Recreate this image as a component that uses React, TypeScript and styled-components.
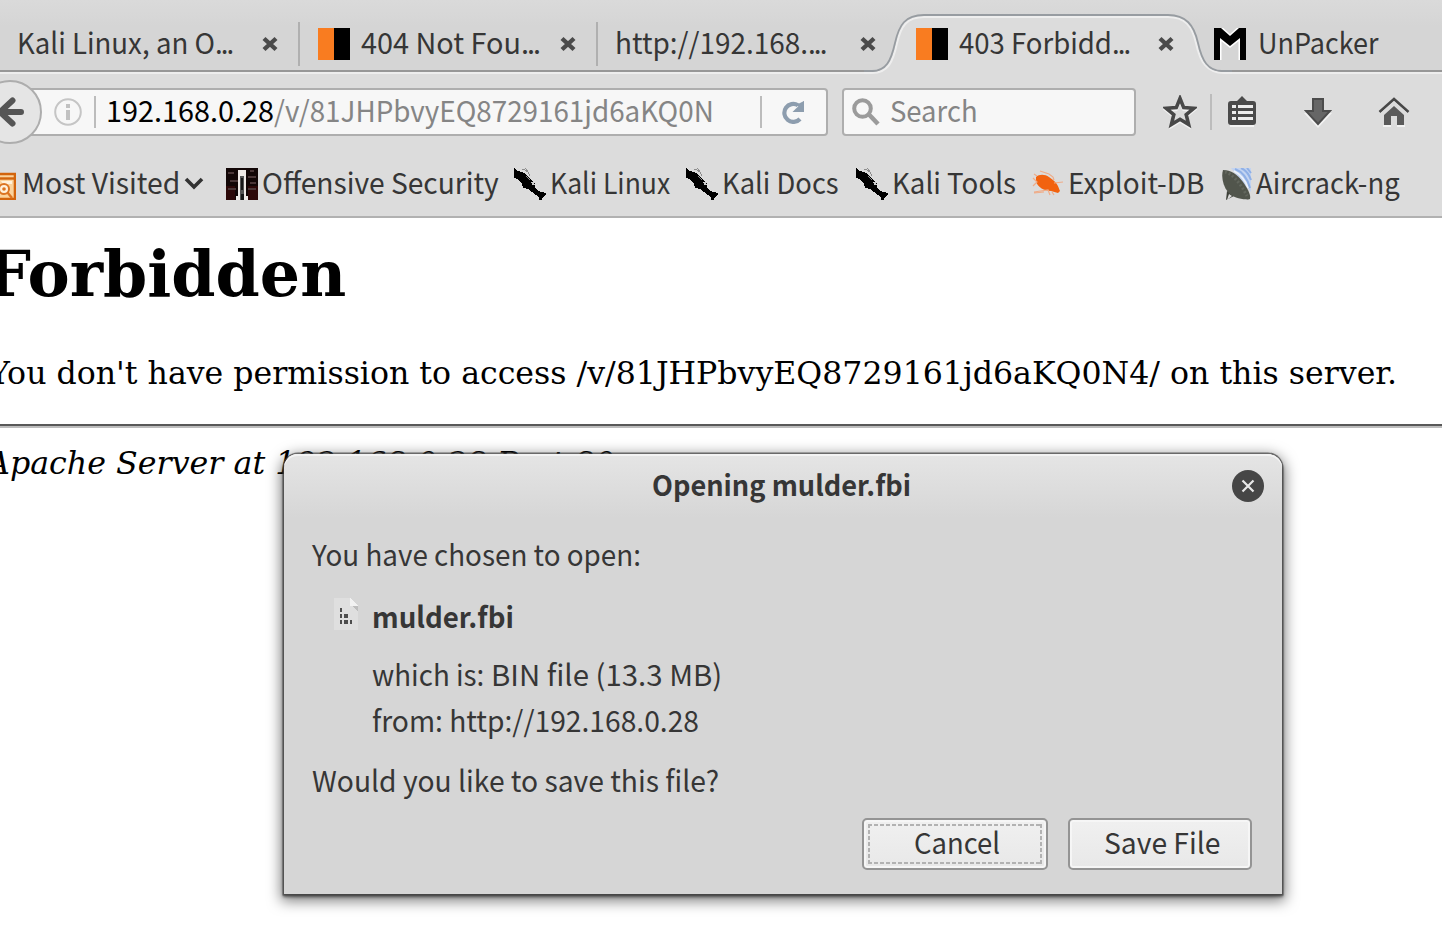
import React, { ReactNode, useLayoutEffect, useRef, useState } from 'react';
import styled, { createGlobalStyle, css } from 'styled-components';

const SANS = '"Noto Sans CJK SC", "Noto Sans", sans-serif';
const SERIF = '"DejaVu Serif", serif';

const GlobalStyle = createGlobalStyle`
  * { box-sizing: border-box; }
  body { margin: 0; background: #fff; overflow: hidden; }
  svg { display: block; flex: none; }
`;

/* Text condensed or widened to an exact run length */
const FitBox = styled.span<{ $w: number }>`
  display: block;
  flex: none;
  width: ${p => p.$w}px;
  white-space: pre;
`;
const FitInner = styled.span`
  display: inline-block;
  transform-origin: 0 50%;
`;
function Fit({ w, children }: { w: number; children: ReactNode }) {
  const ref = useRef<HTMLSpanElement>(null);
  const [scale, setScale] = useState(1);
  useLayoutEffect(() => {
    if (ref.current) setScale(w / ref.current.offsetWidth);
  }, [w]);
  return (
    <FitBox $w={w}>
      <FitInner ref={ref} style={{ transform: `scaleX(${scale})` }}>{children}</FitInner>
    </FitBox>
  );
}

const Screen = styled.div`
  position: relative;
  width: 1442px;
  height: 946px;
  overflow: hidden;
  background: #fff;
  font: 29px/40px ${SANS};
  color: #363636;
`;

/* ---------- tab strip ---------- */
const TabStrip = styled.div`
  display: flex;
  height: 74px;
  background: linear-gradient(#dadada, #d5d5d5 26px);
  border-bottom: 2px solid #ededed;
  box-shadow: inset 0 -2px 0 #979797;
`;
const Tab = styled.div<{ $w: number; $pad?: number; $sep?: boolean }>`
  position: relative;
  display: flex;
  align-items: center;
  width: ${p => p.$w}px;
  height: 72px;
  padding: 16px 0 0 ${p => p.$pad ?? 18}px;
  ${p => p.$sep && css`
    background: linear-gradient(#b0b0b0, #b0b0b0) right 0 top 22px / 2px 44px no-repeat;
  `}
`;
const TabBody = styled.div`
  position: relative;
  display: flex;
  align-items: center;
  width: 100%;
  height: 56px;
`;
const TabLabel = styled.div<{ $ml?: number }>`
  margin: -7px 0 0 ${p => p.$ml ?? 0}px;
`;
const Favicon = styled.span`
  flex: none;
  width: 32px;
  height: 32px;
  margin-right: 11px;
  background: linear-gradient(90deg, #f97c20 50%, #000 50%);
`;
const CloseSlot = styled.span`
  margin-left: auto;
  margin-right: 21px;
`;
const ActiveShape = styled.svg`
  position: absolute;
  left: -34px;
  top: 12px;
`;
const Dots = styled.span`
  letter-spacing: -2px;
`;

const TabClose = () => (
  <svg width="18" height="18" viewBox="0 0 18 18">
    <path d="M3 3.500L15 14.500M15 3.500L3 14.500" stroke="#4b4b4b" strokeWidth="4.400" />
  </svg>
);

/* ---------- navigation bar ---------- */
const NavBar = styled.div`
  display: flex;
  align-items: center;
  height: 76px;
  background: #dcdcdc;
`;
const field = css`
  display: flex;
  align-items: center;
  height: 48px;
  background: #f7f7f7;
  border: 2px solid #aeaeae;
  border-radius: 4px;
`;
const BackButton = styled.div`
  position: relative;
  z-index: 1;
  flex: none;
  display: flex;
  align-items: center;
  justify-content: center;
  width: 64px;
  height: 64px;
  margin: 0 -42px 0 -22px;
  border: 2px solid #adadad;
  border-radius: 50%;
  background: #e5e5e5;
`;
const UrlField = styled.div`
  ${field}
  width: 828px;
  padding-left: 52px;
  border-left: 0;
`;
const Rule = styled.span<{ $h: number; $m: string }>`
  flex: none;
  width: 2px;
  height: ${p => p.$h}px;
  margin: ${p => p.$m};
  background: #bcbcbc;
`;
const FieldText = styled.div<{ $c: string }>`
  display: flex;
  margin-top: -7px;
  color: ${p => p.$c};
`;
const SearchField = styled.div`
  ${field}
  width: 294px;
  margin-left: 14px;
  padding-left: 8px;
  gap: 10px;
`;
const Tools = styled.div`
  display: flex;
  align-items: center;
  padding-left: 27px;
`;
const Tool = styled.span<{ $ml: number }>`
  margin-left: ${p => p.$ml}px;
`;

/* ---------- bookmarks ---------- */
const Bookmarks = styled.div`
  display: flex;
  align-items: center;
  height: 68px;
  padding-top: 2px;
  background: #dcdcdc;
  border-bottom: 2px solid #b1b1b1;
`;
const Bookmark = styled.div<{ $ml: number; $gap?: number }>`
  display: flex;
  align-items: center;
  flex: none;
  gap: ${p => p.$gap ?? 4}px;
  margin-left: ${p => p.$ml}px;
`;
const BookmarkLabel = styled.div`
  margin-top: -6px;
`;

const KaliIcon = () => (
  <svg width="32" height="32" viewBox="0 0 32 32" shapeRendering="crispEdges">
    <path d="M0 0L3 3L8 4L12 6L15 10L18 12L21 16L21 19L24 23L28 24L32 25L32 27L29 29L28 32L25 32L25 29L18 24L14 21L9 20L8 15L3 11L0 10Z" fill="#000" />
    <path d="M8 1H10L14 4L16 8M11 0L15 5M12 8L16 12" stroke="#8e8e8e" strokeWidth="1" fill="none" />
    <path d="M18 14L20 17" stroke="#ccc" strokeWidth="2" />
  </svg>
);
const OffsecIcon = () => (
  <svg width="32" height="32" viewBox="0 0 32 32" shapeRendering="crispEdges">
    <rect width="32" height="32" fill="#120606" />
    <path d="M0 18H9V32H0zM22 18H32V32H22z" fill="#2c0808" />
    <path d="M2 4H8V6H2zM4 12H12V14H4zM22 8H30V10H22zM24 14H30V16H24zM2 20H10V22H2zM22 20H30V22H22zM24 2H28V4H24z" fill="#4a3637" />
    <path d="M12 2H20V28H22V32H10V28H12z" fill="#eee9e6" />
    <path d="M14 8H18V32H14z" fill="#555" />
    <path d="M15 10H17V22H15zM15 26H18V32H15z" fill="#181818" />
  </svg>
);
const FolderIcon = () => (
  <svg width="32" height="28" viewBox="0 0 32 28">
    <path d="M2 2H31V27H2z" fill="#fbd39c" stroke="#d2640c" strokeWidth="2.600" />
    <path d="M4 6.500H30" stroke="#d2640c" strokeWidth="2.400" />
    <path d="M17 9H28V12H19z" fill="#fff1da" />
    <circle cx="20" cy="17" r="5" fill="#fff1da" stroke="#dc7421" strokeWidth="2" />
    <circle cx="20" cy="17" r="1.800" fill="#dc7421" />
    <path d="M23.500 20.500L28 26" stroke="#dc7421" strokeWidth="2.400" />
  </svg>
);
const FolderSlot = styled.span`
  margin-top: 4px;
`;
const BugIcon = () => (
  <svg width="32" height="32" viewBox="0 0 32 32">
    <path d="M4 9C7 6 13 6 17 9L21 12C25 15 26 18 28 23L26 25L19 23C12 23 6 19 4 14Z" fill="#f2620f" />
    <path d="M8 3L17 6L21 9L22 12M1 10L5 14L1 18M2 24L16 22L18 27M12 24L2 25M22 15L31 14M5 8L2 6M20 24L22 27" fill="none" stroke="#efac88" strokeWidth="1.200" />
  </svg>
);
const DishIcon = () => (
  <svg width="30" height="32" viewBox="0 0 30 32">
    <path d="M9 0H29V24Z" fill="#c3d4f1" />
    <path d="M13 1Q24 5 28 20M19 0Q26 3 29 12M25 0L29 5" fill="none" stroke="#8fb0e6" strokeWidth="2" />
    <path d="M12 3Q22 8 26 20" fill="none" stroke="#eef3fb" strokeWidth="1.600" />
    <path d="M5 23L4 32L12 28L28 32Z" fill="#3d4039" />
    <path d="M1 2C9 2 15 6 21 14C26 21 29 27 28 31C20 32 11 30 6 24C1 18-1 9 1 2Z" fill="#51554c" />
    <path d="M3 4C9 5 18 14 25 28" fill="none" stroke="#63675e" strokeWidth="3" strokeDasharray="2 2" />
    <path d="M7 26L5 32L10 28z" fill="#dcdcdc" />
  </svg>
);

/* ---------- page ---------- */
const Page = styled.main`
  padding-top: 19px;
  font-family: ${SERIF};
  color: #000;
`;
const Heading = styled.h1`
  margin: 0 0 0 -14px;
  font-size: 64px;
  line-height: 74px;
  font-weight: 700;
`;
const Paragraph = styled.p`
  margin: 43px 0 0 -11px;
  font-size: 32px;
  line-height: 38px;
`;
const Divider = styled.hr`
  height: 4px;
  margin: 32px 0 16px;
  border: 0;
  border-top: 2px solid #595959;
  background: #bdbdbd;
`;
const Address = styled.address`
  margin-left: -13px;
  font-size: 32px;
  line-height: 38px;
`;

/* ---------- dialog ---------- */
const Dialog = styled.section`
  position: absolute;
  left: 284px;
  top: 454px;
  width: 998px;
  height: 440px;
  border-radius: 14px 14px 0 0;
  background: linear-gradient(#e5e5e5, #d6d6d6 64px);
  box-shadow: inset 0 2px 0 #f3f3f3, 0 0 0 1.5px rgba(70, 70, 70, 0.7), 0 2px 3px 1px rgba(0, 0, 0, 0.5), 0 4px 14px 3px rgba(0, 0, 0, 0.5);
`;
const TitleBar = styled.header`
  display: flex;
  align-items: center;
  height: 64px;
  padding: 0 18px 0 368px;
  font-size: 28px;
  font-weight: 700;
  svg { margin-left: auto; }
`;
const TitleText = styled.div`
  margin-top: -5px;
`;
const DialogBody = styled.div`
  padding: 15px 30px 0 28px;
`;
const Line = styled.div<{ $mt?: number; $indent?: number; $bold?: boolean }>`
  display: flex;
  align-items: center;
  height: 40px;
  margin-top: ${p => p.$mt ?? 0}px;
  padding-left: ${p => p.$indent ?? 0}px;
  font-weight: ${p => (p.$bold ? 700 : 400)};
`;
const FieldName = styled.div`
  margin-right: 7px;
`;
const FileIcon = styled.svg`
  margin: -2px 14px 0 0;
`;
const Actions = styled.div`
  display: flex;
  justify-content: flex-end;
  gap: 20px;
  margin-top: 19px;
`;
const Button = styled.button<{ $w: number; $focus?: boolean }>`
  position: relative;
  display: flex;
  justify-content: center;
  align-items: center;
  width: ${p => p.$w}px;
  height: 52px;
  padding: 0 0 7px 3px;
  border: 2px solid #949494;
  border-radius: 5px;
  background: linear-gradient(#f0f0f0, #e8e8e8);
  box-shadow: inset 0 0 0 2px #f6f6f6;
  color: #363636;
  font: inherit;
  text-align: left;
  ${p => p.$focus && css`
    &::after {
      --h: repeating-linear-gradient(90deg, #b2b2b2 0 4px, transparent 4px 6px);
      --v: repeating-linear-gradient(#b2b2b2 0 4px, transparent 4px 6px);
      content: '';
      position: absolute;
      inset: 4px;
      background: var(--h) top / 100% 2px no-repeat, var(--h) bottom / 100% 2px no-repeat,
        var(--v) left / 2px 100% no-repeat, var(--v) right / 2px 100% no-repeat;
    }
  `}
`;

export default function App() {
  return (
    <Screen>
      <GlobalStyle />
      <TabStrip>
        <Tab $w={300} $pad={17} $sep>
          <TabBody>
            <TabLabel><Fit w={215}>Kali Linux, an O<Dots>...</Dots></Fit></TabLabel>
            <CloseSlot><TabClose /></CloseSlot>
          </TabBody>
        </Tab>
        <Tab $w={298} $sep>
          <TabBody>
            <Favicon />
            <TabLabel><Fit w={178}>404 Not Fou<Dots>...</Dots></Fit></TabLabel>
            <CloseSlot><TabClose /></CloseSlot>
          </TabBody>
        </Tab>
        <Tab $w={300} $pad={17}>
          <TabBody>
            <TabLabel><Fit w={211}>http://192.168.<Dots>...</Dots></Fit></TabLabel>
            <CloseSlot><TabClose /></CloseSlot>
          </TabBody>
        </Tab>
        <Tab $w={298}>
          <ActiveShape width="368" height="64" viewBox="0 0 368 64">
            <path d="M0 64V60H6C22 60 28 50 32 31C36 13 42 3 60 3H304C322 3 330 13 334 31C338 50 344 60 360 60H368V64Z" fill="#dcdcdc" />
            <path d="M0 61H8C24 61 29 50 33 31C37 14 43 5 60 5H304C321 5 328 14 332 31C336 50 343 61 360 61H368" fill="none" stroke="#eeeeee" strokeWidth="2" />
            <path d="M0 59H8C22 59 27 49 31 31C35 13 41 3 60 3H304C322 3 330 13 334 31C338 49 344 59 358 59H368" fill="none" stroke="#979ca1" strokeWidth="1.800" />
          </ActiveShape>
          <TabBody>
            <Favicon />
            <TabLabel><Fit w={170}>403 Forbidd<Dots>...</Dots></Fit></TabLabel>
            <CloseSlot><TabClose /></CloseSlot>
          </TabBody>
        </Tab>
        <Tab $w={246}>
          <TabBody>
            <svg width="32" height="32" viewBox="0 0 32 32">
              <path d="M0 0H7L16 8L25 0H32V32H26V10L16 18L6 10V32H0Z" fill="#000" stroke="#fff" strokeWidth="3" paintOrder="stroke" />
            </svg>
            <TabLabel $ml={12}><Fit w={120}>UnPacker</Fit></TabLabel>
          </TabBody>
        </Tab>
      </TabStrip>

      <NavBar>
        <BackButton>
          <svg width="32" height="32" viewBox="0 0 32 32">
            <path d="M18.500 4.500L6 16L18.500 27.500M7 16H27" fill="none" stroke="#555" strokeWidth="6" strokeLinecap="round" strokeLinejoin="round" />
          </svg>
        </BackButton>
        <UrlField>
          <svg width="32" height="32" viewBox="0 0 32 32">
            <circle cx="16" cy="16" r="12.800" fill="none" stroke="#c5c5c5" strokeWidth="2" />
            <path d="M16 8V12M16 14V24" stroke="#c1c1c1" strokeWidth="4" />
          </svg>
          <Rule $h={32} $m="0 10px 0 10px" />
          <FieldText $c="#000"><Fit w={168}>192.168.0.28</Fit></FieldText>
          <FieldText $c="#858585"><Fit w={440}>/v/81JHPbvyEQ8729161jd6aKQ0N</Fit></FieldText>
          <Rule $h={32} $m="0 20px 0 46px" />
          <svg width="24" height="24" viewBox="0 0 24 24">
            <path d="M19 19A9 9 0 1 1 17 5.200" fill="none" stroke="#8d9dae" strokeWidth="4.200" transform="translate(-1 0)" />
            <path d="M22 1V12H10.500L14 8.500z" fill="#8d9dae" />
            <path d="M14 5L22 1V10z" fill="#8d9dae" />
          </svg>
        </UrlField>
        <SearchField>
          <svg width="28" height="28" viewBox="0 0 28 28">
            <circle cx="10.500" cy="10.500" r="8.300" fill="none" stroke="#9b9b9b" strokeWidth="4" />
            <path d="M17 16.500L26 26" stroke="#9b9b9b" strokeWidth="4.500" />
          </svg>
          <FieldText $c="#858585"><Fit w={88}>Search</Fit></FieldText>
        </SearchField>
        <Tools>
          <svg width="34" height="34" viewBox="0 0 34 34">
            <path d="M17 3.500L20.700 12.600L30.800 13.300L23.200 19.600L25.600 29.500L17 24.300L8.400 29.500L10.800 19.600L3.200 13.300L13.300 12.600Z" fill="none" stroke="#f2f2f2" strokeWidth="3" transform="translate(0 2)" />
            <path d="M17 3.500L20.700 12.600L30.800 13.300L23.200 19.600L25.600 29.500L17 24.300L8.400 29.500L10.800 19.600L3.200 13.300L13.300 12.600Z" fill="none" stroke="#484848" strokeWidth="3.600" />
          </svg>
          <Rule $h={36} $m="0 0 0 13px" />
          <Tool $ml={16}>
            <svg width="28" height="32" viewBox="0 0 28 32">
              <path d="M2 29H26V31H2z" fill="#f4f4f4" />
              <path d="M3 5H9L14 0L19 5H25Q28 5 28 8V26Q28 29 25 29H3Q0 29 0 26V8Q0 5 3 5Z" fill="#4a4a4a" />
              <path d="M4 9H8V12H4zM10 9H25V12H10zM4 15H8V18H4zM10 15H25V18H10zM4 21H8V24H4zM10 21H25V24H10z" fill="#ededed" />
            </svg>
          </Tool>
          <Tool $ml={48}>
            <svg width="28" height="32" viewBox="0 0 28 32">
              <path d="M8 4H20V17H28L14 32L0 17H8z" fill="#f2f2f2" />
              <path d="M9 3H19V15H26L14 28L2 15H9z" fill="#666" stroke="#4c4c4c" strokeWidth="2" />
            </svg>
          </Tool>
          <Tool $ml={46}>
            <svg width="32" height="32" viewBox="0 0 32 32">
              <path d="M5 29H13V31H5zM19 29H27V31H19z" fill="#f2f2f2" />
              <path d="M16 10L26 19V29H19V20H13V29H6V19Z" fill="#5a5a5a" />
              <path d="M1.500 16L16 3L30.500 16" fill="none" stroke="#484848" strokeWidth="2.600" />
              <path d="M3 17.500L16 6L29 17.500" fill="none" stroke="#dcdcdc" strokeWidth="1.200" />
            </svg>
          </Tool>
        </Tools>
      </NavBar>

      <Bookmarks>
        <Bookmark $ml={-16} $gap={6}>
          <FolderSlot><FolderIcon /></FolderSlot>
          <BookmarkLabel><Fit w={158}>Most Visited</Fit></BookmarkLabel>
        </Bookmark>
        <Bookmark $ml={4}>
          <svg width="20" height="14" viewBox="0 0 20 14">
            <path d="M2 2L10 10L18 2" fill="none" stroke="#333" strokeWidth="3.600" />
          </svg>
        </Bookmark>
        <Bookmark $ml={22}>
          <OffsecIcon />
          <BookmarkLabel><Fit w={237}>Offensive Security</Fit></BookmarkLabel>
        </Bookmark>
        <Bookmark $ml={15}>
          <KaliIcon />
          <BookmarkLabel><Fit w={120}>Kali Linux</Fit></BookmarkLabel>
        </Bookmark>
        <Bookmark $ml={16}>
          <KaliIcon />
          <BookmarkLabel><Fit w={117}>Kali Docs</Fit></BookmarkLabel>
        </Bookmark>
        <Bookmark $ml={17}>
          <KaliIcon />
          <BookmarkLabel><Fit w={124}>Kali Tools</Fit></BookmarkLabel>
        </Bookmark>
        <Bookmark $ml={16}>
          <BugIcon />
          <BookmarkLabel><Fit w={136}>Exploit-DB</Fit></BookmarkLabel>
        </Bookmark>
        <Bookmark $ml={18}>
          <DishIcon />
          <BookmarkLabel><Fit w={144}>Aircrack-ng</Fit></BookmarkLabel>
        </Bookmark>
      </Bookmarks>

      <Page>
        <Heading><Fit w={360}>Forbidden</Fit></Heading>
        <Paragraph>
          <Fit w={1408}>You don't have permission to access /v/81JHPbvyEQ8729161jd6aKQ0N4/ on this server.</Fit>
        </Paragraph>
        <Divider />
        <Address><Fit w={628}>Apache Server at 192.168.0.28 Port 80</Fit></Address>
      </Page>

      <Dialog>
        <TitleBar>
          <TitleText><Fit w={259}>Opening mulder.fbi</Fit></TitleText>
          <svg width="32" height="32" viewBox="0 0 32 32">
            <circle cx="16" cy="16" r="16" fill="#464646" />
            <path d="M10.500 10.500L21.500 21.500M21.500 10.500L10.500 21.500" stroke="#e8e8e8" strokeWidth="2.200" />
          </svg>
        </TitleBar>
        <DialogBody>
          <Line><Fit w={329}>You have chosen to open:</Fit></Line>
          <Line $mt={22} $indent={22} $bold>
            <FileIcon width="24" height="32" viewBox="0 0 24 32" shapeRendering="crispEdges">
              <path d="M0 0H16L24 8V32H0z" fill="#dfdfdf" />
              <path d="M16 0L24 8H16z" fill="#f2f2f2" />
              <path d="M18 8H24V14z" fill="#bdbdbd" />
              <path d="M6 10h2v4h-2zM6 16h2v4h-2zM10 16h4v4h-4zM6 22h2v4h-2zM10 22h4v4h-4zM16 22h2v4h-2z" fill="#4d4d4d" />
            </FileIcon>
            <Fit w={142}>mulder.fbi</Fit>
          </Line>
          <Line $mt={18} $indent={60}>
            <FieldName><Fit w={112}>which is:</Fit></FieldName>
            <Fit w={231}>BIN file (13.3 MB)</Fit>
          </Line>
          <Line $mt={6} $indent={60}><Fit w={327}>from: http://192.168.0.28</Fit></Line>
          <Line $mt={20}><Fit w={407}>Would you like to save this file?</Fit></Line>
          <Actions>
            <Button $w={186} $focus><Fit w={86}>Cancel</Fit></Button>
            <Button $w={184}><Fit w={116}>Save File</Fit></Button>
          </Actions>
        </DialogBody>
      </Dialog>
    </Screen>
  );
}
